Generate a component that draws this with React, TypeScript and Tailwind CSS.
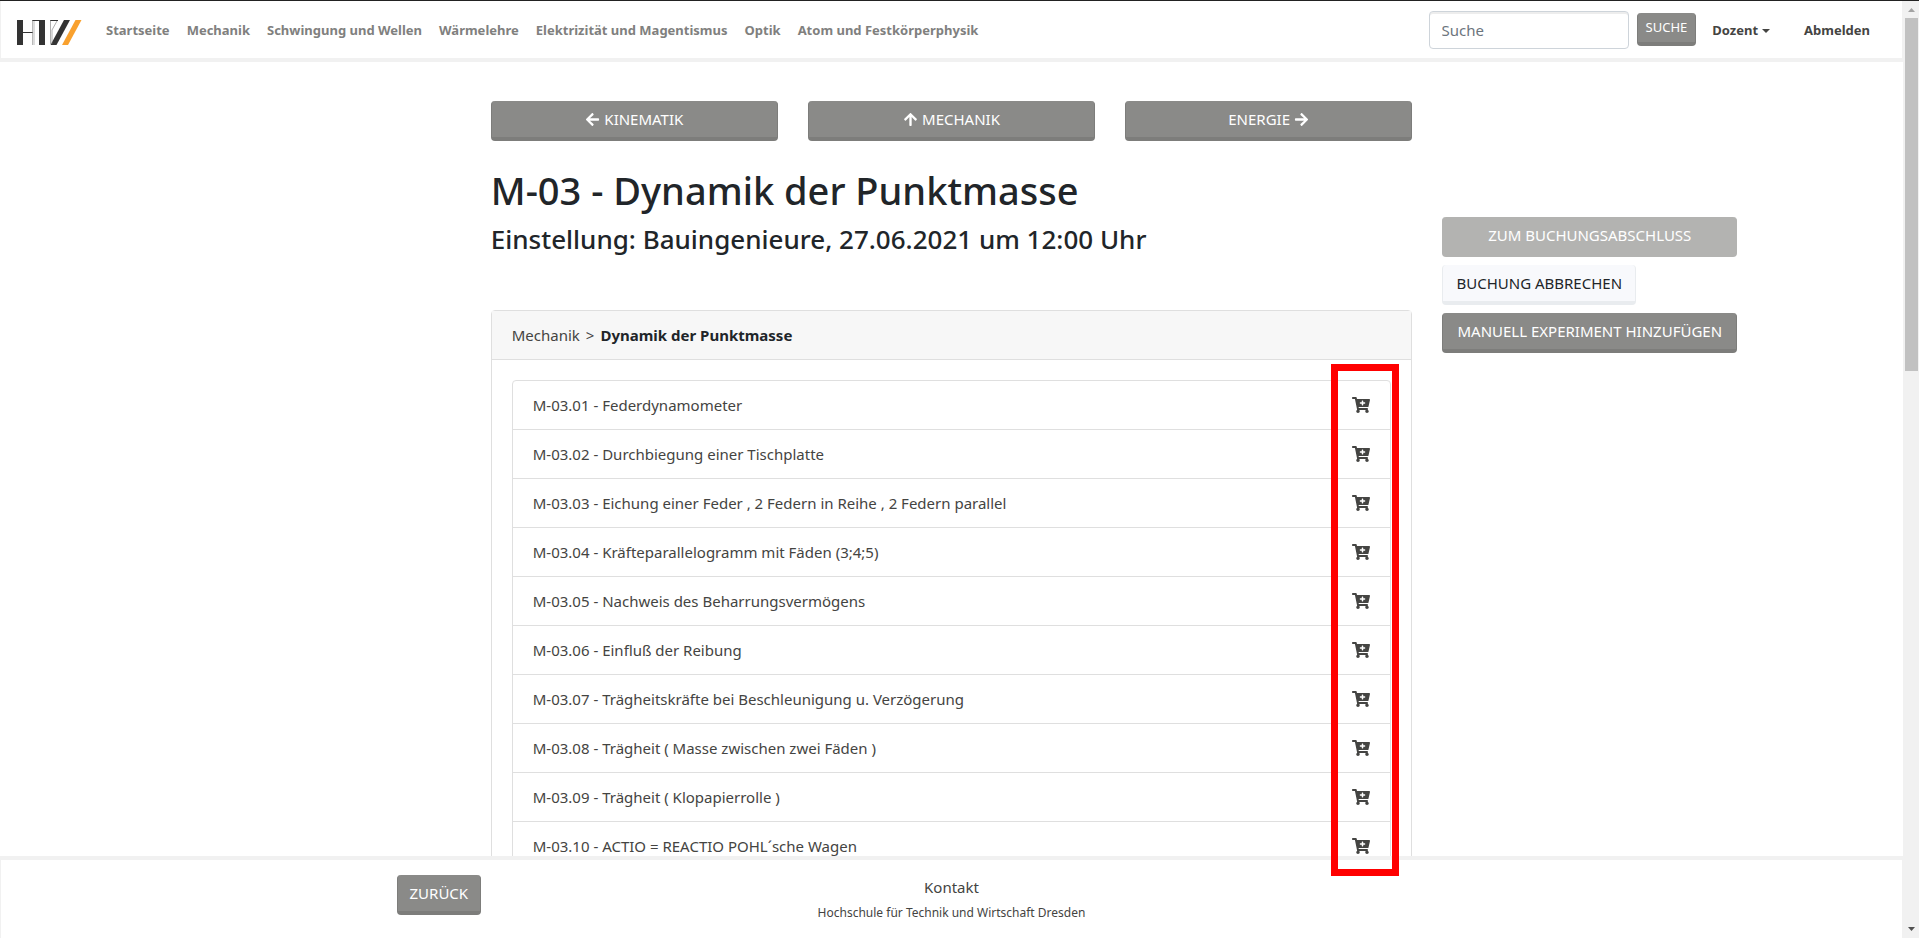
import { FaArrowLeft, FaArrowRight, FaArrowUp, FaCartPlus } from "react-icons/fa";

const NAV_ITEMS = [
  "Startseite",
  "Mechanik",
  "Schwingung und Wellen",
  "Wärmelehre",
  "Elektrizität und Magentismus",
  "Optik",
  "Atom und Festkörperphysik",
];

const EXPERIMENTS = [
  "M-03.01 - Federdynamometer",
  "M-03.02 - Durchbiegung einer Tischplatte",
  "M-03.03 - Eichung einer Feder , 2 Federn in Reihe , 2 Federn parallel",
  "M-03.04 - Kräfteparallelogramm mit Fäden (3;4;5)",
  "M-03.05 - Nachweis des Beharrungsvermögens",
  "M-03.06 - Einfluß der Reibung",
  "M-03.07 - Trägheitskräfte bei Beschleunigung u. Verzögerung",
  "M-03.08 - Trägheit ( Masse zwischen zwei Fäden )",
  "M-03.09 - Trägheit ( Klopapierrolle )",
  "M-03.10 - ACTIO = REACTIO POHL´sche Wagen",
];

const BTN =
  "flex h-10 items-center justify-center gap-1 rounded border border-t-0 border-b-4 px-3 text-[15px] uppercase whitespace-nowrap";
const BTN_DARK = "border-[#7d7d7b] bg-[#8a8a88] text-white";

function Logo() {
  return (
    <svg width="66" height="26" viewBox="0 0 66 26" role="img" aria-label="HTW">
      <g fill="#333333">
        <path d="M0 0h6v25H0z" />
        <path d="M6 12h10v1H6z" />
        <path d="M22 0h6v25h-6z" />
        <path d="M15 0h7v1h-7z" />
        <path d="M33 0h8v1h-8z" />
        <path d="M47 0h6L39.500 25H33.500z" />
      </g>
      <path d="M15.500 0v25M17 1v24" stroke="#8a8a8a" strokeWidth="0.600" fill="none" />
      <path d="M33.500 0v24M40 1l-5 9v14" stroke="#777777" strokeWidth="0.600" fill="none" />
      <path d="M58.500 0h6L51 25h-6z" fill="#f9a12e" />
    </svg>
  );
}

function Navbar() {
  return (
    <header className="flex h-[61px] shrink-0 items-center border-x border-b-4 border-[#f1f1f1] bg-white px-4">
      <a href="#" className="mt-[6px] mr-[15px]">
        <Logo />
      </a>
      <nav className="flex gap-px pt-[2px] text-[13px] font-bold text-[#80807e]">
        {NAV_ITEMS.map((item) => (
          <a key={item} href="#" className="px-2 py-2 whitespace-nowrap">
            {item}
          </a>
        ))}
      </nav>
      <form className="ml-auto flex items-center gap-2">
        <input
          type="search"
          aria-label="Suche"
          placeholder="Suche"
          className="h-[38px] w-[200px] rounded border border-[#ced4da] px-3 text-[15px] shadow-[inset_0_2px_0_#ededed] placeholder:text-[#6c757d]"
        />
        <button
          type="button"
          className="h-[33px] rounded border border-t-0 border-b-4 border-[#7d7d7b] bg-[#8a8a88] px-2 text-[13px] text-white uppercase"
        >
          Suche
        </button>
      </form>
      <div className="ml-2 flex items-center gap-[18px] pt-[2px] pr-2 text-[13px] font-bold text-[#444442]">
        <button type="button" className="flex items-center gap-1 px-2 py-2">
          Dozent
          <svg width="8" height="4" viewBox="0 0 8 4" aria-hidden="true">
            <path d="M0 0h8L4 4z" fill="currentColor" />
          </svg>
        </button>
        <a href="#" className="px-2 py-2">
          Abmelden
        </a>
      </div>
    </header>
  );
}

function ExperimentCard() {
  return (
    <section className="rounded border border-[#dfdfdf]">
      <div className="flex gap-[6px] border-b border-[#dfdfdf] bg-[#f7f7f7] px-5 py-3 text-[15px] leading-6">
        <a href="#" className="text-[#444442]">
          Mechanik
        </a>
        <span className="text-[#444442]">&gt;</span>
        <strong className="font-bold text-[#212529]">Dynamik der Punktmasse</strong>
      </div>
      <div className="p-5">
        <ul className="divide-y divide-[#dfdfdf] rounded border border-[#dfdfdf]">
          {EXPERIMENTS.map((name) => (
            <li key={name} className="flex items-center justify-between px-5 py-3 text-[15px] leading-6 text-[#444442]">
              <a href="#">{name}</a>
              <button type="button" aria-label={`${name} buchen`}>
                <FaCartPlus className="h-4 w-[18px]" />
              </button>
            </li>
          ))}
        </ul>
      </div>
    </section>
  );
}

function Footer() {
  return (
    <footer className="h-[82px] shrink-0 border-x border-t-4 border-[#f1f1f1] bg-white">
      <div className="mx-auto grid max-w-[1140px] grid-cols-[1fr_2fr_1fr] px-[15px] pt-[15px] text-[#444442]">
        <button type="button" className={`${BTN} ${BTN_DARK} justify-self-start`}>
          Zurück
        </button>
        <div className="text-center">
          <a href="#" className="block text-[15px] leading-6">
            Kontakt
          </a>
          <p className="text-xs leading-7">Hochschule für Technik und Wirtschaft Dresden</p>
        </div>
      </div>
    </footer>
  );
}

function Scrollbar() {
  return (
    <div className="flex w-4 shrink-0 flex-col items-center bg-[#f1f1f1]" aria-hidden="true">
      <svg width="16" height="17" viewBox="0 0 16 17">
        <path d="M5 11h7L8.500 7z" fill="#a3a3a3" />
      </svg>
      <div className="h-[353px] w-[13px] bg-[#c1c1c1]" />
      <svg width="16" height="17" viewBox="0 0 16 17" className="mt-auto">
        <path d="M5 6h7L8.500 10z" fill="#505050" />
      </svg>
    </div>
  );
}

export default function App() {
  return (
    <div className="flex h-screen overflow-hidden border-t border-[#222222] bg-white font-['Noto_Sans','Open_Sans',sans-serif] text-[#212529]">
      <div className="relative flex min-w-0 flex-1 flex-col">
        <Navbar />
        <main className="grid min-h-0 flex-1 grid-cols-4 overflow-hidden">
          <div className="col-span-2 col-start-2 px-[15px] pt-[39px]">
            <div className="grid grid-cols-3 gap-[30px]">
              <a href="#" className={`${BTN} ${BTN_DARK}`}>
                <FaArrowLeft />
                Kinematik
              </a>
              <a href="#" className={`${BTN} ${BTN_DARK}`}>
                <FaArrowUp />
                Mechanik
              </a>
              <a href="#" className={`${BTN} ${BTN_DARK}`}>
                Energie
                <FaArrowRight />
              </a>
            </div>
            <h1 className="mt-[25px] text-[38px] leading-[48px] font-medium">M-03 - Dynamik der Punktmasse</h1>
            <h2 className="mt-2 mb-[54px] text-[26px] leading-[34px] font-medium">
              Einstellung: Bauingenieure, 27.06.2021 um 12:00 Uhr
            </h2>
            <ExperimentCard />
          </div>
          <aside className="flex flex-col items-start px-[15px] pt-[155px]">
            <div className="flex min-w-[295px] flex-col gap-2">
              <button type="button" disabled className={`${BTN} border-[#b3b3b1] bg-[#b3b3b1] text-white`}>
                Zum Buchungsabschluss
              </button>
              <button
                type="button"
                className={`${BTN} min-w-[194px] self-start border-[#e9ecef] bg-[#f8f9fc] text-[#212529]`}
              >
                Buchung abbrechen
              </button>
              <button type="button" className={`${BTN} ${BTN_DARK}`}>
                Manuell Experiment hinzufügen
              </button>
            </div>
          </aside>
        </main>
        <Footer />
        <div className="pointer-events-none absolute top-[363px] right-[calc(25%+28px)] bottom-[62px] w-[68px] border-7 border-[#ff0000]" />
      </div>
      <Scrollbar />
    </div>
  );
}
